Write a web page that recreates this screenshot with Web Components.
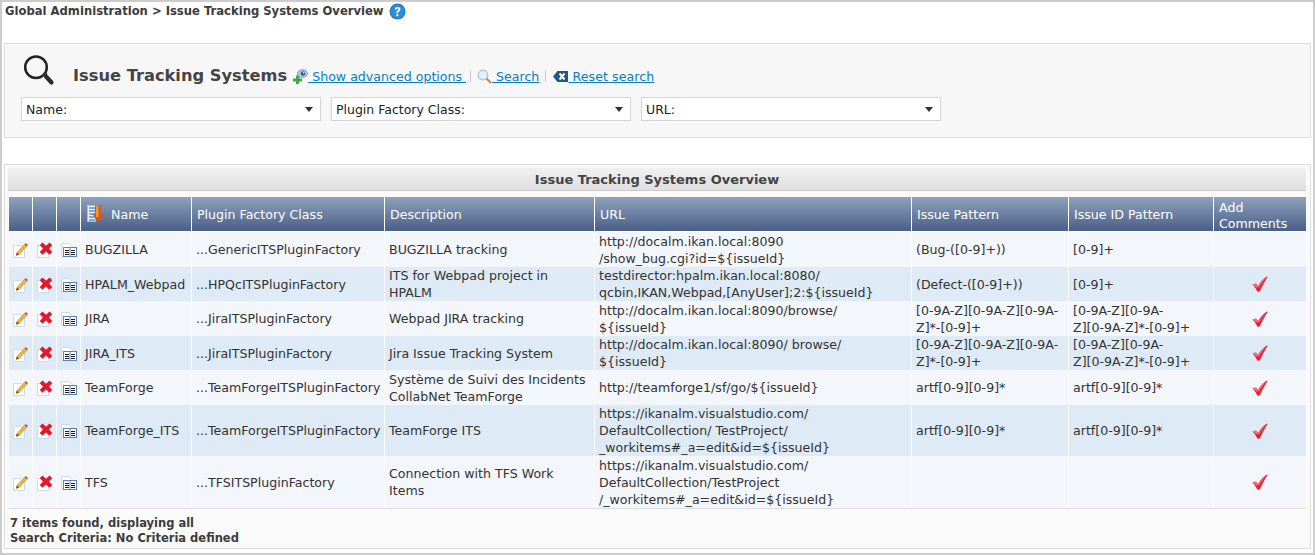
<!DOCTYPE html>
<html><head><meta charset="utf-8"><title>Issue Tracking Systems Overview</title>
<style>
html,body{margin:0;padding:0;background:#fff}
body{font:13px "DejaVu Sans",sans-serif;color:#333;width:1315px;height:555px;overflow:hidden}
</style></head><body>
<its-page>
  <page-title slot="title">Global Administration &gt; Issue Tracking Systems Overview</page-title>
  <search-panel slot="search" heading="Issue Tracking Systems"></search-panel>
  <its-overview slot="table"></its-overview>
</its-page>
<script>
const FONT='"DejaVu Sans",Verdana,sans-serif';
const PAPER=`<path d="M.5 4.500h8l3 3v9H.5z" fill="#fff" stroke="#c9dcee"/>`;
const ICON={
 pencil:`<svg width="18" height="18" viewBox="0 0 18 18">${PAPER}<path d="M3 14.500l1-3 7.800-8.500 2.200 2-7.800 8.500z" fill="#eeb53c" stroke="#b07d24" stroke-width=".5"/><path d="M11.600 3.200l1.200-1.300 2.200 2-1.200 1.300z" fill="#c8503c"/><path d="M3 14.500l1-3 2.200 2z" fill="#6a5238"/></svg>`,
 del:`<svg width="18" height="18" viewBox="0 0 18 18">${PAPER}<path d="M5.500 1.500L9 4.800l3.500-3.300 2.800 2.700-3.300 3.400 3.300 3.400-2.800 2.800L9 10.400 5.500 13.800l-2.800-2.800L6 7.600 2.700 4.200z" fill="#e3182d"/></svg>`,
 view:`<svg width="18" height="18" viewBox="0 0 18 18"><path d="M.5 2.500h8l3 3v10H.5z" fill="#fff" stroke="#c9dcee"/><rect x="2.500" y="6.500" width="13" height="9" fill="#fff" stroke="#5d82b4"/><path d="M9 7v8" stroke="#5d82b4"/><path d="M4 9.500h4M4 11.500h4M4 13.500h4M10 9.500h4M10 11.500h4M10 13.500h4" stroke="#1c1c1c"/></svg>`,
 check:`<svg width="18" height="17" viewBox="0 0 18 17"><path d="M1.500 9.500l3.500-1 2 2.800C9.500 7 12 4 15.800 1.500l.8.600C14 6 11.500 10.500 8.800 16.500l-2.300.3C5 14 3.500 11.500 1.500 9.500z" fill="#e81f30"/><path d="M1.500 9.500l3.500-1 2 2.800-.8 1.500C5 12 3.500 10.800 1.500 9.500z" fill="#f2737b"/><path d="M7 11.300C9.500 7 12 4 15 2.500L8 13z" fill="#f8656f" opacity=".8"/></svg>`,
 sort:`<svg width="17" height="18" viewBox="0 0 17 18"><path d="M.5.500h8v16h-8z" fill="#eef4fb" stroke="#a6bfdc"/><path d="M2 3h6M2 6h6M2 9h6M2 12h6M2 15h6" stroke="#4a94d8" stroke-width="1.600"/><path d="M8 .5h5.500V9H17l-6 8.500L5.500 9H8z" fill="#dd5216"/><path d="M9 .5h2.500V12H9z" fill="#f39a33"/></svg>`,
 help:`<svg width="17" height="17" viewBox="0 0 17 17"><circle cx="8.500" cy="8.500" r="8" fill="#1f7fc4"/><circle cx="8.500" cy="8.500" r="6.600" fill="#2c8fd6"/><path d="M5.800 6.400c.2-1.600 1.300-2.400 2.800-2.400s2.800.9 2.800 2.300c0 2-2.300 2-2.300 3.900H7.400c0-2.600 2.100-2.700 2.100-3.900 0-.5-.4-.9-1-.9s-1 .4-1.100 1z" fill="#fff"/><rect x="7.400" y="11.200" width="1.900" height="1.900" fill="#fff"/></svg>`,
 bigsearch:`<svg width="32" height="32" viewBox="0 0 32 32"><circle cx="13" cy="13.200" r="10.800" fill="none" stroke="#222" stroke-width="2.500"/><path d="M20.500 21l1.500-1.500 2 1" stroke="#333" stroke-width="2" fill="none"/><path d="M23 22.500l5.500 6" stroke="#2a2a2a" stroke-width="4.200" stroke-linecap="round"/></svg>`,
 adv:`<svg width="15" height="15" viewBox="0 0 15 15"><ellipse cx="9.500" cy="4.500" rx="5" ry="3.800" fill="#b8cde2" stroke="#7d9bbc"/><circle cx="10" cy="4.500" r="2.300" fill="#2a5f96"/><circle cx="10.700" cy="3.800" r=".8" fill="#fff"/><path d="M3 6.500h3v3h3v3H6v2.500H3v-2.500H0v-3h3z" fill="#3fa83f"/></svg>`,
 search:`<svg width="15" height="15" viewBox="0 0 15 15"><circle cx="6" cy="6" r="4.800" fill="#e4eff9" stroke="#a9c0d6" stroke-width="1.200"/><path d="M9.500 9.500l4.500 4.500" stroke="#e8762a" stroke-width="2"/></svg>`,
 reset:`<svg width="15" height="11" viewBox="0 0 15 11"><path d="M4.500 0H15v11H4.500L0 5.500z" fill="#1d5a85"/><path d="M6.500 2.500l5 6M11.500 2.500l-5 6" stroke="#fff" stroke-width="2"/></svg>`
};
function tpl(html){const t=document.createElement('template');t.innerHTML=html;return t}
class Base extends HTMLElement{
 constructor(){super();this.attachShadow({mode:'open'})}
 mount(t){this.shadowRoot.appendChild(t.content.cloneNode(true))}
}
const pageT=tpl(`<style>
:host{display:flex;flex-direction:column;box-sizing:border-box;width:1315px;height:555px;border:2px solid #ccc;padding:0 2px 4px 2px}
.t{height:41px;flex:none}.s{flex:none;margin-bottom:26px}
</style><div class="t"><slot name="title"></slot></div><div class="s"><slot name="search"></slot></div><slot name="table"></slot>`);
customElements.define('its-page',class extends Base{constructor(){super();this.mount(pageT)}});
const titleT=tpl(`<style>
:host{display:flex;align-items:flex-start;font:bold 11.600px ${FONT};color:#3c3c3c;padding:2px 0 0 1px;line-height:14px;gap:5px}
span{display:flex;margin-top:-1px}
</style><slot></slot><span>${ICON.help}</span>`);
customElements.define('page-title',class extends Base{constructor(){super();this.mount(titleT)}});
const selT=tpl(`<style>
:host{display:flex;align-items:center;justify-content:space-between;box-sizing:border-box;height:24px;background:#fff;border:1px solid #d4d4d4;padding:0 7px 0 4px;font:12.500px ${FONT};color:#222}
i{width:0;height:0;border:4.500px solid transparent;border-top:5px solid #333;border-bottom:0}
</style><slot></slot><i></i>`);
customElements.define('filter-select',class extends Base{constructor(){super();this.mount(selT)}});
const linkT=tpl(`<style>
:host{display:inline-flex;align-items:center;font:12.600px ${FONT}}
a{color:#0a7ec2;text-decoration:underline;display:inline-flex;align-items:center;white-space:pre}
span{display:flex}
</style><a href="#"><span id="i"></span><slot></slot></a>`);
customElements.define('tool-link',class extends Base{constructor(){super();this.mount(linkT)}
 connectedCallback(){this.shadowRoot.getElementById('i').innerHTML=ICON[this.getAttribute('icon')]}});
const searchT=tpl(`<style>
:host{display:block;box-sizing:border-box;height:95px;background:#f7f7f7;border:1px solid #ddd;padding:9px 16px 0 16px}
.head{display:flex;align-items:flex-end;height:40px}
.big{display:flex;width:52px;align-self:flex-start;margin:1px 0 0 2px}
h1{font:bold 16.250px ${FONT};color:#444;margin:0 6px 0 -2px;line-height:22px;padding-bottom:6px}
.tools{display:flex;align-items:center;height:18px;padding-bottom:8px}
.sep{width:1px;height:12px;background:#ccc;margin:0 6px 0 4px}
.sep.b{margin:0 7px 0 6px}
.r{letter-spacing:.08px}
.filters{display:grid;grid-template-columns:300px 300px 300px;gap:10px;margin-top:4px}
</style>
<div class="head"><span class="big">${ICON.bigsearch}</span><h1 id="h"></h1>
<div class="tools"><tool-link icon="adv"> Show advanced options </tool-link><span class="sep"></span><tool-link icon="search"> Search</tool-link><span class="sep b"></span><tool-link class="r" icon="reset"> Reset search</tool-link></div></div>
<div class="filters"><filter-select>Name:</filter-select><filter-select>Plugin Factory Class:</filter-select><filter-select>URL:</filter-select></div>`);
customElements.define('search-panel',class extends Base{constructor(){super();this.mount(searchT)}
 connectedCallback(){this.shadowRoot.getElementById('h').textContent=this.getAttribute('heading')}});
const rows=[
 [35,'BUGZILLA','...GenericITSPluginFactory','BUGZILLA tracking','http://docalm.ikan.local:8090<br>/show_bug.cgi?id=${issueId}','(Bug-([0-9]+))','[0-9]+',0],
 [34,'HPALM_Webpad','...HPQcITSPluginFactory','ITS for Webpad project in<br>HPALM','testdirector:hpalm.ikan.local:8080/<br>qcbin,IKAN,Webpad,[AnyUser];2:${issueId}','(Defect-([0-9]+))','[0-9]+',1],
 [35,'JIRA','...JiraITSPluginFactory','Webpad JIRA tracking','http://docalm.ikan.local:8090/browse/<br>${issueId}','[0-9A-Z][0-9A-Z][0-9A-<br>Z]*-[0-9]+','[0-9A-Z][0-9A-<br>Z][0-9A-Z]*-[0-9]+',1],
 [34,'JIRA_ITS','...JiraITSPluginFactory','Jira Issue Tracking System','http://docalm.ikan.local:8090/ browse/<br>${issueId}','[0-9A-Z][0-9A-Z][0-9A-<br>Z]*-[0-9]+','[0-9A-Z][0-9A-<br>Z][0-9A-Z]*-[0-9]+',1],
 [35,'TeamForge','...TeamForgeITSPluginFactory','Système de Suivi des Incidents<br>CollabNet TeamForge','http://teamforge1/sf/go/${issueId}','artf[0-9][0-9]*','artf[0-9][0-9]*',1],
 [51,'TeamForge_ITS','...TeamForgeITSPluginFactory','TeamForge ITS','https://ikanalm.visualstudio.com/<br>DefaultCollection/ TestProject/<br>_workitems#_a=edit&amp;id=${issueId}','artf[0-9][0-9]*','artf[0-9][0-9]*',1],
 [52,'TFS','...TFSITSPluginFactory','Connection with TFS Work<br>Items','https://ikanalm.visualstudio.com/<br>DefaultCollection/TestProject<br>/_workitems#_a=edit&amp;id=${issueId}','','',1],
];
const tableT=tpl(`<style>
:host{display:block;box-sizing:border-box;height:386px;border:1px solid #ddd;padding:3px 4px 0 3px;background:#fafafa;font:12.600px ${FONT};color:#333}
.cap{height:22px;background:linear-gradient(#f0f0f0,#e0e0e0);border-bottom:1px solid #ccc;text-align:center;font:bold 13px/23px ${FONT};color:#444}
table{border-collapse:separate;border-spacing:0;table-layout:fixed;width:1297px;margin:6px 0 0 1px}
th{height:34px;padding:0 5px;font-weight:normal;text-align:left;color:#fff;line-height:17px;background:linear-gradient(#8ea2bf,#4a5f86);border-right:1px solid #fff;border-bottom:1px solid #fff;box-sizing:border-box;vertical-align:middle}
th:last-child{border-right:0;vertical-align:top;padding-top:2px;line-height:16px}
th:last-child span{display:block;margin:1px 0 -1px}
td{padding:0 0 0 4px;line-height:17px;border-right:1px solid #f9fbfd;box-sizing:border-box;vertical-align:middle;white-space:nowrap;color:#333}
td:last-child{border-right:0}
tr:nth-child(odd) td{background:#f3f6fb}
tr:nth-child(even) td{background:#deebf6}
td.ic svg{display:block;margin-top:1px}
td.ck{text-align:center;padding:3px 0 0 0}
td.ck svg{display:inline-block}
.n{display:flex;align-items:center;gap:7px;margin-left:1px}
.n svg{display:block}
.foot{border-top:1px solid #ddd;font:bold 11.500px/15px ${FONT};color:#3c3c3c;padding:7px 0 0 2px}
</style>
<div class="cap"><slot>Issue Tracking Systems Overview</slot></div>
<table><colgroup><col style="width:24px"><col style="width:24px"><col style="width:24px"><col style="width:111px"><col style="width:193px"><col style="width:210px"><col style="width:317px"><col style="width:157px"><col style="width:145px"><col style="width:92px"></colgroup>
<thead><tr><th></th><th></th><th></th><th><span class="n">${ICON.sort}<span>Name</span></span></th><th>Plugin Factory Class</th><th>Description</th><th>URL</th><th>Issue Pattern</th><th>Issue ID Pattern</th><th><span>Add Comments</span></th></tr></thead>
<tbody id="b"></tbody></table>
<div class="foot">7 items found, displaying all<br>Search Criteria: No Criteria defined</div>`);
customElements.define('its-overview',class extends Base{constructor(){super();this.mount(tableT);
 this.shadowRoot.getElementById('b').innerHTML=rows.map(r=>`<tr style="height:${r[0]}px"><td class="ic">${ICON.pencil}</td><td class="ic">${ICON.del}</td><td class="ic">${ICON.view}</td><td>${r[1]}</td><td>${r[2]}</td><td>${r[3]}</td><td>${r[4]}</td><td>${r[5]}</td><td>${r[6]}</td><td class="ck">${r[7]?ICON.check:''}</td></tr>`).join('')}});
</script></body></html>
